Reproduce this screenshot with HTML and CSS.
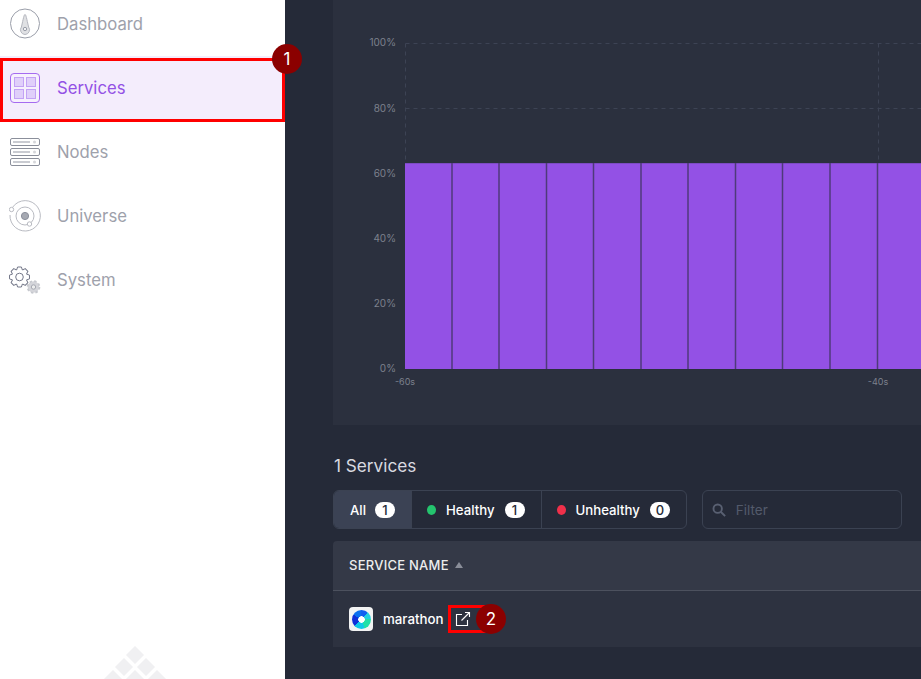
FILE: index.html
```html
<!DOCTYPE html>
<html lang="en">
<head>
    <meta charset="UTF-8">
    <meta name="viewport" content="width=device-width, initial-scale=1.0">
    <title>Services</title>
    <link rel="stylesheet" href="styles.css">
</head>
<body>

    <aside class="sidebar">
        <nav class="nav">
            <a class="nav-item">
                <svg class="nav-icon" width="32" height="32" viewBox="0 0 32 32" fill="none">
                    <circle cx="16" cy="15.500" r="14.500" stroke="#9a9ea9"/>
                    <path d="M16 6.500c1 0 1.600 4 3.600 12.500a4.700 4.700 0 0 1 -3.600 7.500a4.700 4.700 0 0 1 -3.600 -7.500c2 -8.500 2.600 -12.500 3.600 -12.500z" fill="#e0e1e4" stroke="#b4b6be"/>
                    <circle cx="16" cy="21" r="1.700" fill="#f2f2f4" stroke="#9a9ea9"/>
                </svg>
                <span>Dashboard</span>
            </a>
            <a class="nav-item active">
                <svg class="nav-icon" width="32" height="32" viewBox="0 0 32 32" fill="none">
                    <rect x="1.500" y="1.500" width="29" height="29" rx="3.500" fill="#f6f0fd" stroke="#a56bf0"/>
                    <rect x="5.500" y="5.500" width="9" height="9" fill="#e0cffa" stroke="#c3a2f5"/>
                    <rect x="17.500" y="5.500" width="9" height="9" fill="#e0cffa" stroke="#c3a2f5"/>
                    <rect x="5.500" y="17.500" width="9" height="9" fill="#e0cffa" stroke="#c3a2f5"/>
                    <rect x="17.500" y="17.500" width="9" height="9" fill="#e0cffa" stroke="#c3a2f5"/>
                </svg>
                <span>Services</span>
            </a>
            <a class="nav-item">
                <svg class="nav-icon" width="32" height="32" viewBox="0 0 32 32" fill="none" stroke="#8b8f9b">
                    <rect x="1.500" y="2.500" width="29" height="7" rx="1.500"/>
                    <rect x="1.500" y="12.500" width="29" height="7" rx="1.500"/>
                    <rect x="1.500" y="22.500" width="29" height="7" rx="1.500"/>
                    <rect x="4" y="5" width="17" height="2" fill="#c9cbd1" stroke="none"/>
                    <rect x="4" y="15" width="17" height="2" fill="#c9cbd1" stroke="none"/>
                    <rect x="4" y="25" width="17" height="2" fill="#c9cbd1" stroke="none"/>
                    <circle cx="25.500" cy="6" r="1.500" fill="#d5d6da" stroke="none"/>
                    <circle cx="25.500" cy="16" r="1.500" fill="#d5d6da" stroke="none"/>
                    <circle cx="25.500" cy="26" r="1.500" fill="#d5d6da" stroke="none"/>
                </svg>
                <span>Nodes</span>
            </a>
            <a class="nav-item">
                <svg class="nav-icon" width="32" height="32" viewBox="0 0 32 32" fill="none" stroke="#b9bbc2">
                    <path d="M3.800 7a15.200 15.200 0 1 1 -2.800 8"/>
                    <circle cx="16" cy="16" r="9"/>
                    <circle cx="16" cy="16" r="3.600" fill="#a6a9b2" stroke="#8b8f9b"/>
                    <circle cx="2.500" cy="9.500" r="2.200" fill="#fff"/>
                    <circle cx="20.500" cy="24" r="2.200" fill="#fff"/>
                </svg>
                <span>Universe</span>
            </a>
            <a class="nav-item">
                <svg class="nav-icon" width="32" height="32" viewBox="0 0 32 32" fill="none">
                    <defs>
                        <path id="gear-tooth" d="M-2.900 -7L-1.900 -10H1.900L2.900 -7"/>
                    </defs>
                    <g transform="translate(10.500 13)" stroke="#75798a" stroke-linejoin="round">
                        <use href="#gear-tooth"/>
                        <use href="#gear-tooth" transform="rotate(45)"/>
                        <use href="#gear-tooth" transform="rotate(90)"/>
                        <use href="#gear-tooth" transform="rotate(135)"/>
                        <use href="#gear-tooth" transform="rotate(180)"/>
                        <use href="#gear-tooth" transform="rotate(225)"/>
                        <use href="#gear-tooth" transform="rotate(270)"/>
                        <use href="#gear-tooth" transform="rotate(315)"/>
                        <circle r="3.800"/>
                    </g>
                    <g transform="translate(24.500 23)">
                        <circle r="5.800" fill="#d4d5da" stroke="#c6c8ce" stroke-width="2" stroke-dasharray="2.400 2.150"/>
                        <circle r="5" fill="#d4d5da"/>
                        <circle r="2.200" fill="#eceded" stroke="#a6a9b2"/>
                    </g>
                </svg>
                <span>System</span>
            </a>
        </nav>
        <svg class="sidebar-logo" width="70" height="36" viewBox="0 0 70 36">
            <g fill="#f0f0f2">
                <path d="M35 3l9 9 -9 9 -9 -9z"/>
                <path d="M24 15l9 9 -9 9 -9 -9z"/>
                <path d="M46 15l9 9 -9 9 -9 -9z"/>
                <path d="M13 27l9 9 -9 9 -9 -9z"/>
                <path d="M35 27l9 9 -9 9 -9 -9z"/>
                <path d="M57 27l9 9 -9 9 -9 -9z"/>
            </g>
        </svg>
    </aside>

    <main class="main">
        <section class="chart-panel">
            <svg width="588" height="425" viewBox="333 0 588 425">
                <g stroke="#3d4354" stroke-dasharray="4 4" fill="none">
                    <path d="M405.500 43.500H921"/>
                    <path d="M405.500 108.500H921"/>
                    <path d="M405.500 43.500V163"/>
                    <path d="M878.500 43.500V163"/>
                </g>
                <rect x="405" y="163" width="516" height="206" fill="#9351e5"/>
                <path d="M405 163.500H921" stroke="#7d4bc4"/>
                <g stroke="#4f3a7a" stroke-width="1.500">
                    <path d="M452 163V369"/>
                    <path d="M499 163V369"/>
                    <path d="M546.500 163V369"/>
                    <path d="M593.500 163V369"/>
                    <path d="M641 163V369"/>
                    <path d="M688 163V369"/>
                    <path d="M735.500 163V369"/>
                    <path d="M782.500 163V369"/>
                    <path d="M830 163V369"/>
                    <path d="M877.500 163V369"/>
                </g>
                <g class="axis-label" text-anchor="end">
                    <text x="396" y="46">100%</text>
                    <text x="396" y="112">80%</text>
                    <text x="396" y="177">60%</text>
                    <text x="396" y="242">40%</text>
                    <text x="396" y="307">20%</text>
                    <text x="396" y="372">0%</text>
                </g>
                <g class="axis-label time-label" text-anchor="middle">
                    <text x="405" y="385">-60s</text>
                    <text x="878" y="385">-40s</text>
                </g>
            </svg>
        </section>

        <h2 class="section-title">1 Services</h2>

        <div class="toolbar">
            <div class="tabs">
                <div class="tab active">All <span class="count">1</span></div>
                <div class="tab"><span class="dot green"></span>Healthy <span class="count">1</span></div>
                <div class="tab"><span class="dot red"></span>Unhealthy <span class="count">0</span></div>
            </div>
            <div class="filter">
                <svg width="14" height="14" viewBox="0 0 16 16" fill="none" stroke="#596072" stroke-width="2.200">
                    <circle cx="6.500" cy="6.500" r="4.800"/>
                    <path d="M10 10l5 5"/>
                </svg>
                <span>Filter</span>
            </div>
        </div>

        <div class="table">
            <div class="table-head">SERVICE NAME <span class="sort-arrow"></span></div>
            <div class="table-row">
                <span class="service-icon"><span class="disc"></span></span>
                <span class="service-name">marathon</span>
                <svg class="open-icon" width="16" height="16" viewBox="0 0 16 16" fill="none" stroke="#fff" stroke-width="1.100">
                    <path d="M7 3.500H1.500V14.500H12.500V9"/>
                    <path d="M6.500 9.500L14.500 1.500"/>
                    <path d="M10 1.500H14.500V6"/>
                </svg>
            </div>
        </div>
    </main>

    <!-- Annotations over the screenshot -->
    <div class="mark-box mark-box-services"></div>
    <div class="mark-box mark-box-link"></div>
    <div class="mark-num mark-num-1">1</div>
    <div class="mark-num mark-num-2">2</div>

</body>
</html>
```

FILE: styles.css
```css
/* General body styling */
body {
    font-family: 'Inter', 'Liberation Sans', sans-serif;
    margin: 0;
    padding: 0;
    height: 679px;
    overflow: hidden;
    display: flex;
    background-color: #252a38;
    color: #fff;
}

/* Sidebar */
.sidebar {
    position: relative;
    width: 285px;
    flex-shrink: 0;
    background-color: #fff;
    overflow: hidden;
}

.nav {
    margin-top: -8px;
}

.nav-item {
    display: flex;
    align-items: center;
    gap: 16px;
    height: 64px;
    padding-left: 9px;
    font-size: 16.7px;
    line-height: 62px;
    color: #9ea1ab;
}

.nav-item span {
    margin-top: -1px;
}

.nav-item.active {
    background-color: #f4edfc;
    color: #9351e5;
}

.nav-icon {
    flex-shrink: 0;
}

.sidebar-logo {
    position: absolute;
    left: 100px;
    top: 643px;
}

/* Main column */
.main {
    flex: 1;
    min-width: 0;
    padding-left: 48px;
}

.chart-panel {
    height: 425px;
    background-color: #2b303e;
}

.chart-panel svg {
    display: block;
}

.axis-label {
    font-family: 'Inter', 'Liberation Sans', sans-serif;
    font-size: 10px;
    fill: #7d818d;
}

.time-label {
    font-size: 9px;
}

.section-title {
    margin: 30px 0 0 1px;
    font-size: 17.2px;
    line-height: 22px;
    font-weight: 400;
    color: #d9dae0;
}

/* Tabs and filter */
.toolbar {
    display: flex;
    gap: 15px;
    margin-top: 13px;
}

.tabs {
    display: flex;
    height: 39px;
    box-sizing: border-box;
    border: 1px solid #3b4252;
    border-radius: 6px;
    overflow: hidden;
}

.tab {
    display: flex;
    align-items: center;
    padding: 0 16px 0 15px;
    font-size: 13.2px;
    font-weight: 500;
    border-left: 1px solid #3b4252;
}

.tab:first-child {
    border-left: none;
    padding: 0 16px;
}

.tab.active {
    background-color: #3b4254;
}

.count {
    min-width: 20px;
    height: 16px;
    margin-left: 10px;
    border-radius: 8px;
    background-color: #fff;
    color: #252a38;
    font-size: 13px;
    line-height: 16px;
    text-align: center;
}

.tab:first-child .count {
    margin-left: 9px;
}

.dot {
    width: 9px;
    height: 10px;
    margin-right: 10px;
    border-radius: 50%;
}

.dot.green {
    background-color: #24c46e;
}

.dot.red {
    background-color: #f0304a;
}

.filter {
    display: flex;
    align-items: center;
    gap: 10px;
    width: 200px;
    height: 39px;
    box-sizing: border-box;
    padding-left: 9px;
    border: 1px solid #3b4252;
    border-radius: 6px;
    font-size: 13.5px;
    color: #535a6b;
}

/* Services table */
.table {
    margin-top: 12px;
}

.table-head {
    display: flex;
    align-items: center;
    gap: 6px;
    height: 47px;
    padding: 0 0 2px 16px;
    background-color: #343947;
    border-bottom: 1px solid #4c515e;
    border-radius: 4px 0 0 0;
    font-size: 13px;
    letter-spacing: .25px;
    font-weight: 500;
    color: #eceded;
}

.sort-arrow {
    width: 0;
    height: 0;
    border-left: 4px solid transparent;
    border-right: 4px solid transparent;
    border-bottom: 6px solid #8a8e99;
}

.table-row {
    display: flex;
    align-items: center;
    height: 56px;
    padding-left: 16px;
    background-color: #2d3240;
}

.service-icon {
    display: flex;
    align-items: center;
    justify-content: center;
    width: 24px;
    height: 24px;
    border-radius: 4px;
    background-color: #f2f3f3;
}

.disc {
    display: block;
    width: 19px;
    height: 19px;
    border-radius: 50%;
    background:
        radial-gradient(circle, #fff 0 3px, transparent 3.500px),
        conic-gradient(#1060f0 0 40deg, #20d0e0 40deg 90deg, #20e0a8 90deg 160deg, #10c8e8 160deg 225deg, #1030d8 225deg 300deg, #0a70f0 300deg 360deg);
}

.service-name {
    margin-left: 10px;
    margin-top: -1px;
    font-size: 13.3px;
    font-weight: 500;
    line-height: 18px;
}

.open-icon {
    margin-left: 11px;
}

/* Red annotation marks */
.mark-box {
    position: absolute;
    box-sizing: border-box;
    border: 3px solid #f00;
}

.mark-box-services {
    left: 0;
    top: 58px;
    width: 285px;
    height: 64px;
}

.mark-box-link {
    left: 448px;
    top: 605px;
    width: 38px;
    height: 28px;
}

.mark-num {
    position: absolute;
    width: 30px;
    height: 30px;
    border-radius: 50%;
    background-color: #8b0000;
    font-size: 17px;
    line-height: 30px;
    text-align: center;
    color: #fff;
}

.mark-num-1 {
    left: 272px;
    top: 44px;
}

.mark-num-2 {
    left: 476px;
    top: 604px;
}
```
